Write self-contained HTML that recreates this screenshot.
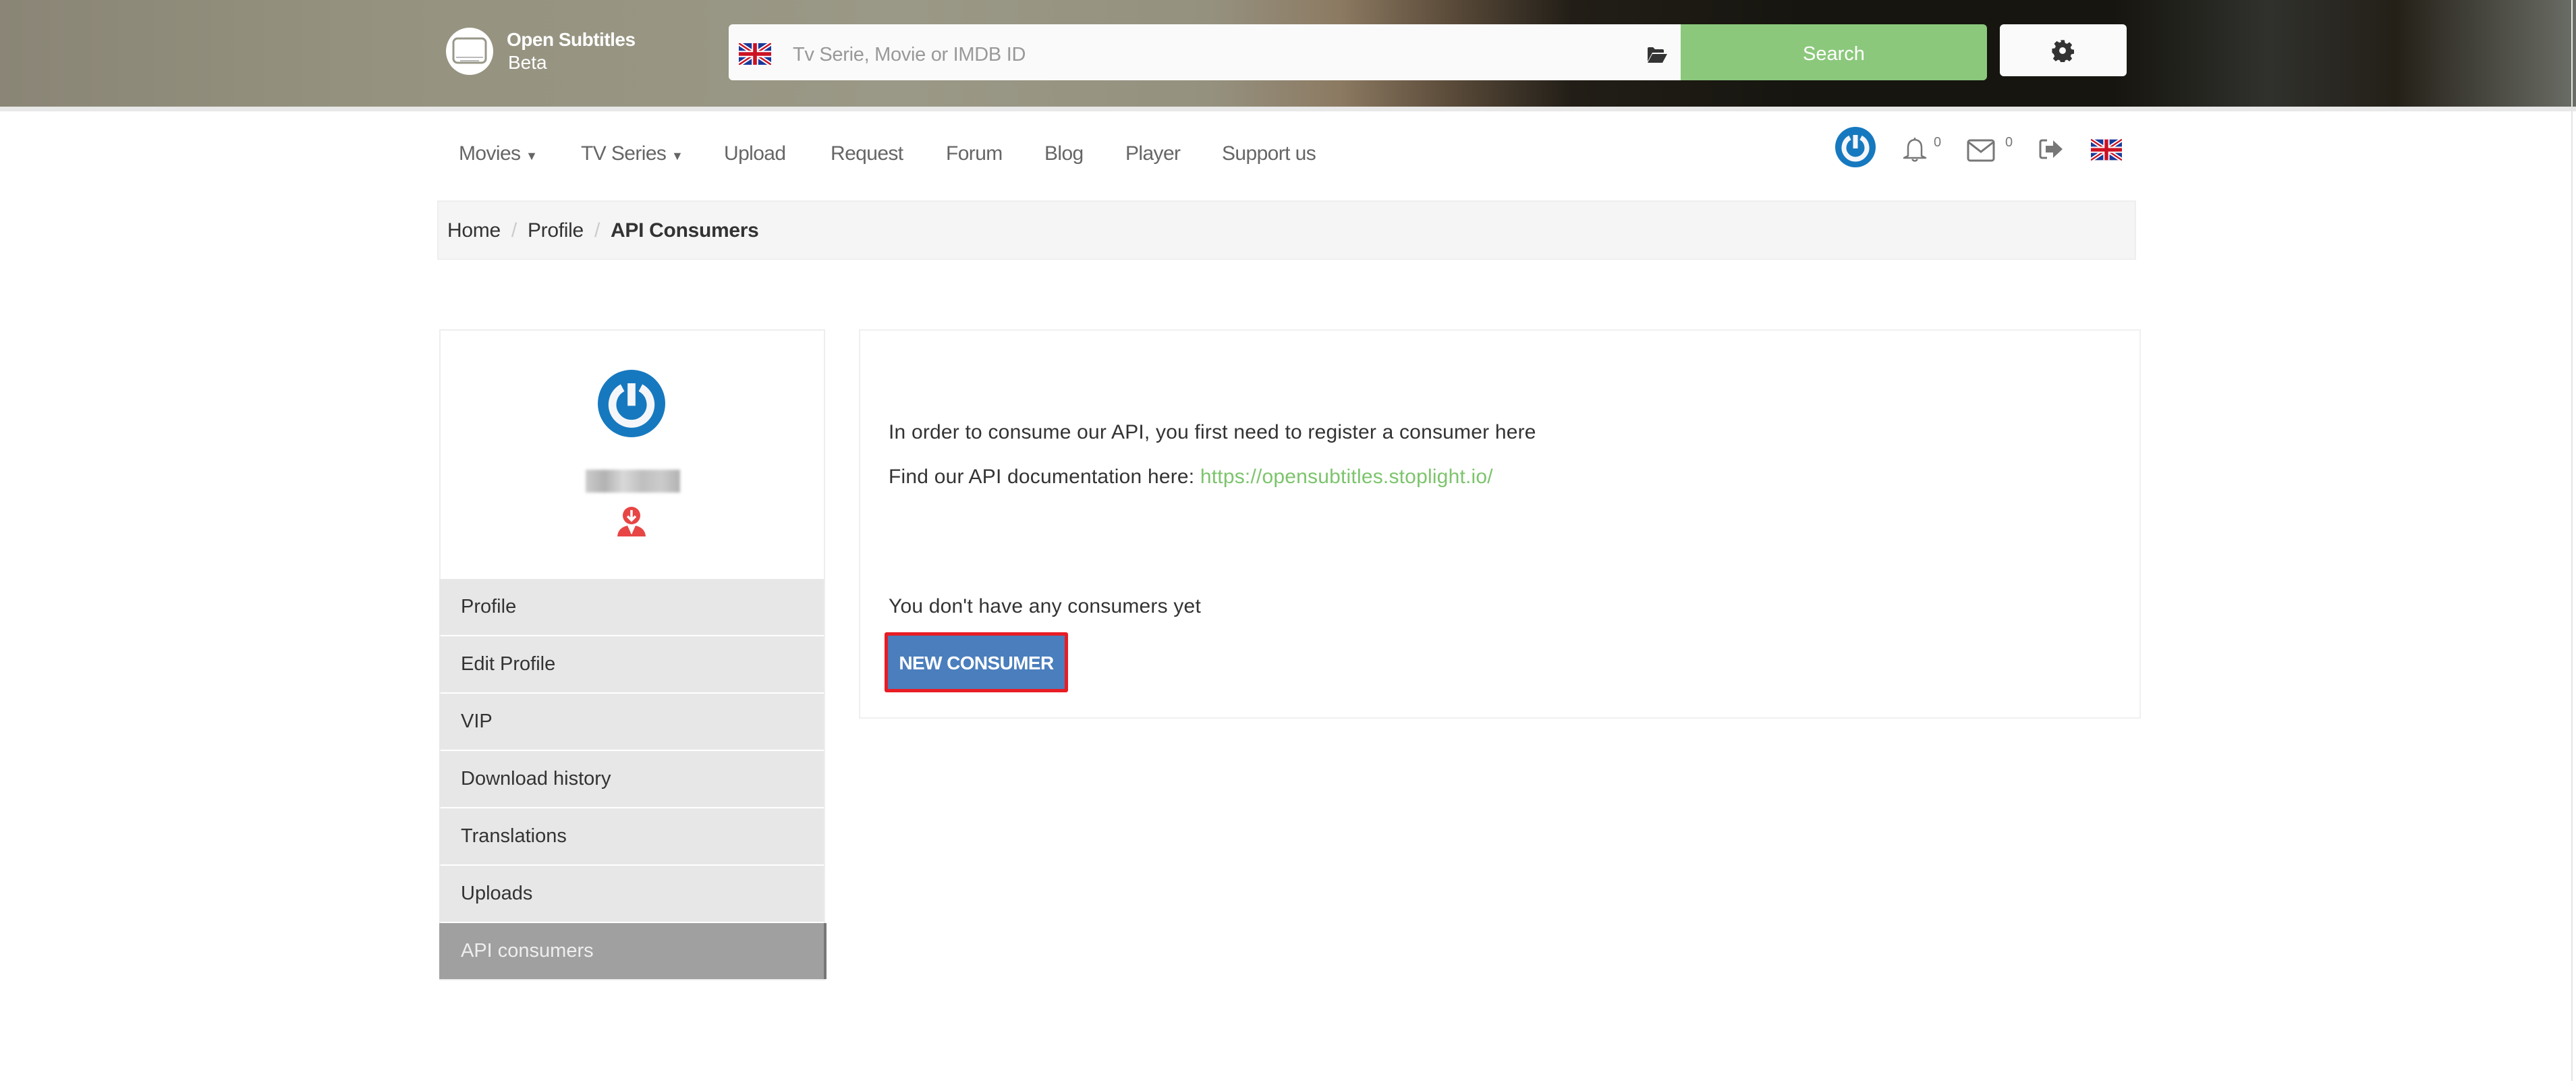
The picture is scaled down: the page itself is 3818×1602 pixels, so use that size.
<!DOCTYPE html>
<html><head><meta charset="utf-8"><style>
*{margin:0;padding:0;box-sizing:border-box}
body{width:3818px;height:1602px;position:relative;background:#fff;font-family:"Liberation Sans",sans-serif;overflow:hidden}
.a{position:absolute;white-space:nowrap}
.hdr{left:0;top:0;width:3818px;height:158px;background:linear-gradient(90deg,#8a8576 0%,#95937f 15%,#9a9886 35%,#95917f 47%,#8c7a62 52%,#5e4e3c 56%,#221e17 61%,#16150f 70%,#16150f 82%,#30312d 88%,#242018 93%,#6b6e66 100%)}
.nav{font-size:30px;color:#666;top:208px;letter-spacing:-0.6px}
.txt{font-size:30px;color:#333;letter-spacing:0.2px}
.mi{position:absolute;left:651px;width:570px;height:83px;background:#e7e7e7;font-size:29px;color:#333;padding-left:32px;line-height:83px;letter-spacing:0px}
</style></head><body>
<div class="a hdr"></div>
<div class="a" style="left:0;top:158px;width:3818px;height:7px;background:#e8e8e8"></div>
<div class="a" style="left:3811px;top:0;width:2px;height:1602px;background:#e4e4e4"></div>
<svg class="a" style="left:660px;top:40px" width="72" height="72" viewBox="0 0 72 72"><circle cx="36" cy="36" r="35" fill="#fff"/><rect x="12" y="17" width="48" height="36" rx="6" fill="none" stroke="#999888" stroke-width="3"/><rect x="16" y="44" width="40" height="2" fill="#bbb"/><rect x="22" y="49" width="28" height="2" fill="#bbb"/></svg>
<div class="a" style="left:751px;top:43px;font-size:28px;font-weight:bold;color:#fff;letter-spacing:-0.5px">Open Subtitles</div>
<div class="a" style="left:753px;top:77px;font-size:28px;color:#fff">Beta</div>
<div class="a" style="left:1080px;top:36px;width:1420px;height:83px;background:#fafafa;border-radius:6px"></div>
<svg class="a" style="left:1095px;top:64px" width="48" height="32" viewBox="0 0 60 40"><rect width="60" height="40" fill="#1a3a9a"/><path d="M0 0L60 40M60 0L0 40" stroke="#fff" stroke-width="8"/><path d="M0 0L60 40M60 0L0 40" stroke="#cc1122" stroke-width="3"/><path d="M30 0V40M0 20H60" stroke="#fff" stroke-width="12"/><path d="M30 0V40M0 20H60" stroke="#cc1122" stroke-width="7"/></svg>
<div class="a" style="left:1175px;top:65px;font-size:29px;color:#999;letter-spacing:-0.3px">Tv Serie, Movie or IMDB ID</div>
<svg class="a" style="left:2440px;top:69px" width="32" height="25" viewBox="0 0 32 25"><path d="M2 3Q2 1 4 1H10L13 4H24Q26 4 26 6V9H9L2 22Z" fill="#333"/><path d="M9 11H31L24 24H2Z" fill="#333"/></svg>
<div class="a" style="left:2491px;top:36px;width:454px;height:83px;background:#8bc87c;border-radius:0 6px 6px 0;color:#fff;font-size:29px;text-align:center;line-height:88px">Search</div>
<div class="a" style="left:2964px;top:36px;width:188px;height:77px;background:#fafafa;border-radius:6px"></div>
<svg class="a" style="left:3040px;top:58px" width="34" height="34" viewBox="0 0 24 24"><path fill="#333" d="M10 1h4l.6 3 2 .9 2.6-1.7 2.8 2.8-1.7 2.6.9 2 3 .6v4l-3 .6-.9 2 1.7 2.6-2.8 2.8-2.6-1.7-2 .9-.6 3h-4l-.6-3-2-.9-2.6 1.7-2.8-2.8 1.7-2.6-.9-2L1 14v-4l3-.6.9-2L3.2 4.8 6 2l2.6 1.7 2-.9z"/><circle cx="12" cy="12" r="3.5" fill="#fafafa"/></svg>
<div class="a nav" style="left:680px;top:211px">Movies <span style="font-size:18px">▼</span></div>
<div class="a nav" style="left:861px;top:211px">TV Series <span style="font-size:18px">▼</span></div>
<div class="a nav" style="left:1073px;top:211px">Upload</div>
<div class="a nav" style="left:1231px;top:211px">Request</div>
<div class="a nav" style="left:1402px;top:211px">Forum</div>
<div class="a nav" style="left:1548px;top:211px">Blog</div>
<div class="a nav" style="left:1668px;top:211px">Player</div>
<div class="a nav" style="left:1811px;top:211px">Support us</div>
<svg class="a" style="left:2720px;top:188px" width="60" height="60" viewBox="0 0 60 60"><circle cx="30" cy="30" r="30" fill="#1679bf"/><path d="M22 16A17 17 0 1 0 38 16" fill="none" stroke="#f4f6fa" stroke-width="7"/><path d="M30 12V32" stroke="#f4f6fa" stroke-width="7"/></svg>
<svg class="a" style="left:2819px;top:201px" width="38" height="40" viewBox="0 0 38 40"><path d="M19 3V6M9 30V18Q9 7 19 6Q29 7 29 18V30L35 33H3L9 30Z" fill="none" stroke="#777" stroke-width="2.5" stroke-linejoin="round"/><path d="M15 35Q19 40 23 35" fill="none" stroke="#777" stroke-width="2.5"/></svg>
<div class="a" style="left:2866px;top:200px;font-size:20px;color:#777">0</div>
<svg class="a" style="left:2915px;top:206px" width="42" height="34" viewBox="0 0 42 34"><rect x="2" y="2" width="38" height="30" rx="3" fill="none" stroke="#777" stroke-width="3"/><path d="M3 5L21 19L39 5" fill="none" stroke="#777" stroke-width="3"/></svg>
<div class="a" style="left:2972px;top:200px;font-size:20px;color:#777">0</div>
<svg class="a" style="left:3022px;top:205px" width="37" height="32" viewBox="0 0 37 32"><path d="M12 3H5Q2 3 2 6V26Q2 29 5 29H12" fill="none" stroke="#777" stroke-width="3"/><path d="M10 11H21V3L35 16L21 29V21H10Z" fill="#777"/></svg>
<svg class="a" style="left:3099px;top:206px" width="46" height="32" viewBox="0 0 60 40"><rect width="60" height="40" fill="#1a3a9a"/><path d="M0 0L60 40M60 0L0 40" stroke="#fff" stroke-width="8"/><path d="M0 0L60 40M60 0L0 40" stroke="#cc1122" stroke-width="3"/><path d="M30 0V40M0 20H60" stroke="#fff" stroke-width="12"/><path d="M30 0V40M0 20H60" stroke="#cc1122" stroke-width="7"/></svg>
<div class="a" style="left:648px;top:297px;width:2518px;height:88px;background:#f5f5f5;border:2px solid #eee"></div>
<div class="a" style="left:663px;top:325px;font-size:30px;color:#333;letter-spacing:-0.3px">Home <span style="color:#ccc;padding:0 8px">/</span> Profile <span style="color:#ccc;padding:0 8px">/</span> <b>API Consumers</b></div>
<div class="a" style="left:651px;top:488px;width:572px;height:965px;border:2px solid #eee;background:#fff"></div>
<svg class="a" style="left:886px;top:548px" width="100" height="100" viewBox="0 0 60 60"><circle cx="30" cy="30" r="30" fill="#1679bf"/><path d="M22 16A17 17 0 1 0 38 16" fill="none" stroke="#f4f6fa" stroke-width="7"/><path d="M30 12V32" stroke="#f4f6fa" stroke-width="7"/></svg>
<div class="a" style="left:868px;top:696px;width:140px;height:34px;background:linear-gradient(90deg,#bbb,#999 20%,#ccc 40%,#aaa 60%,#bbb 80%,#999);opacity:.75;filter:blur(2px)"></div>
<svg class="a" style="left:912px;top:750px" width="48" height="46" viewBox="0 0 48 46"><path d="M3 45Q4 32 18 29L24 42L30 29Q44 32 45 45Z" fill="#e84545"/><path d="M22 31h4l-1 10h-2z" fill="#fff"/><circle cx="24" cy="14" r="13" fill="#e84545"/><path d="M24 6V20M18 15L24 21L30 15" fill="none" stroke="#fff" stroke-width="3.5"/></svg>
<div class="mi" style="top:858px">Profile</div>
<div class="mi" style="top:943px">Edit Profile</div>
<div class="mi" style="top:1028px">VIP</div>
<div class="mi" style="top:1113px">Download history</div>
<div class="mi" style="top:1198px">Translations</div>
<div class="mi" style="top:1283px">Uploads</div>
<div class="mi" style="top:1368px;height:83px;background:#a0a0a0;color:#eee;border-right:4px solid #777;width:574px">API consumers</div>
<div class="a" style="left:1273px;top:488px;width:1900px;height:577px;border:2px solid #f0f0f0"></div>
<div class="a txt" style="left:1317px;top:624px">In order to consume our API, you first need to register a consumer here</div>
<div class="a txt" style="left:1317px;top:690px">Find our API documentation here: <span style="color:#7cc46c">https://opensubtitles.stoplight.io/</span></div>
<div class="a txt" style="left:1317px;top:882px">You don't have any consumers yet</div>
<div class="a" style="left:1311px;top:937px;width:272px;height:89px;border:5px solid #e81c24;border-radius:3px;background:#4a7ebd;color:#fff;font-size:28px;font-weight:bold;text-align:center;line-height:81px;letter-spacing:-0.6px">NEW CONSUMER</div>
</body></html>
